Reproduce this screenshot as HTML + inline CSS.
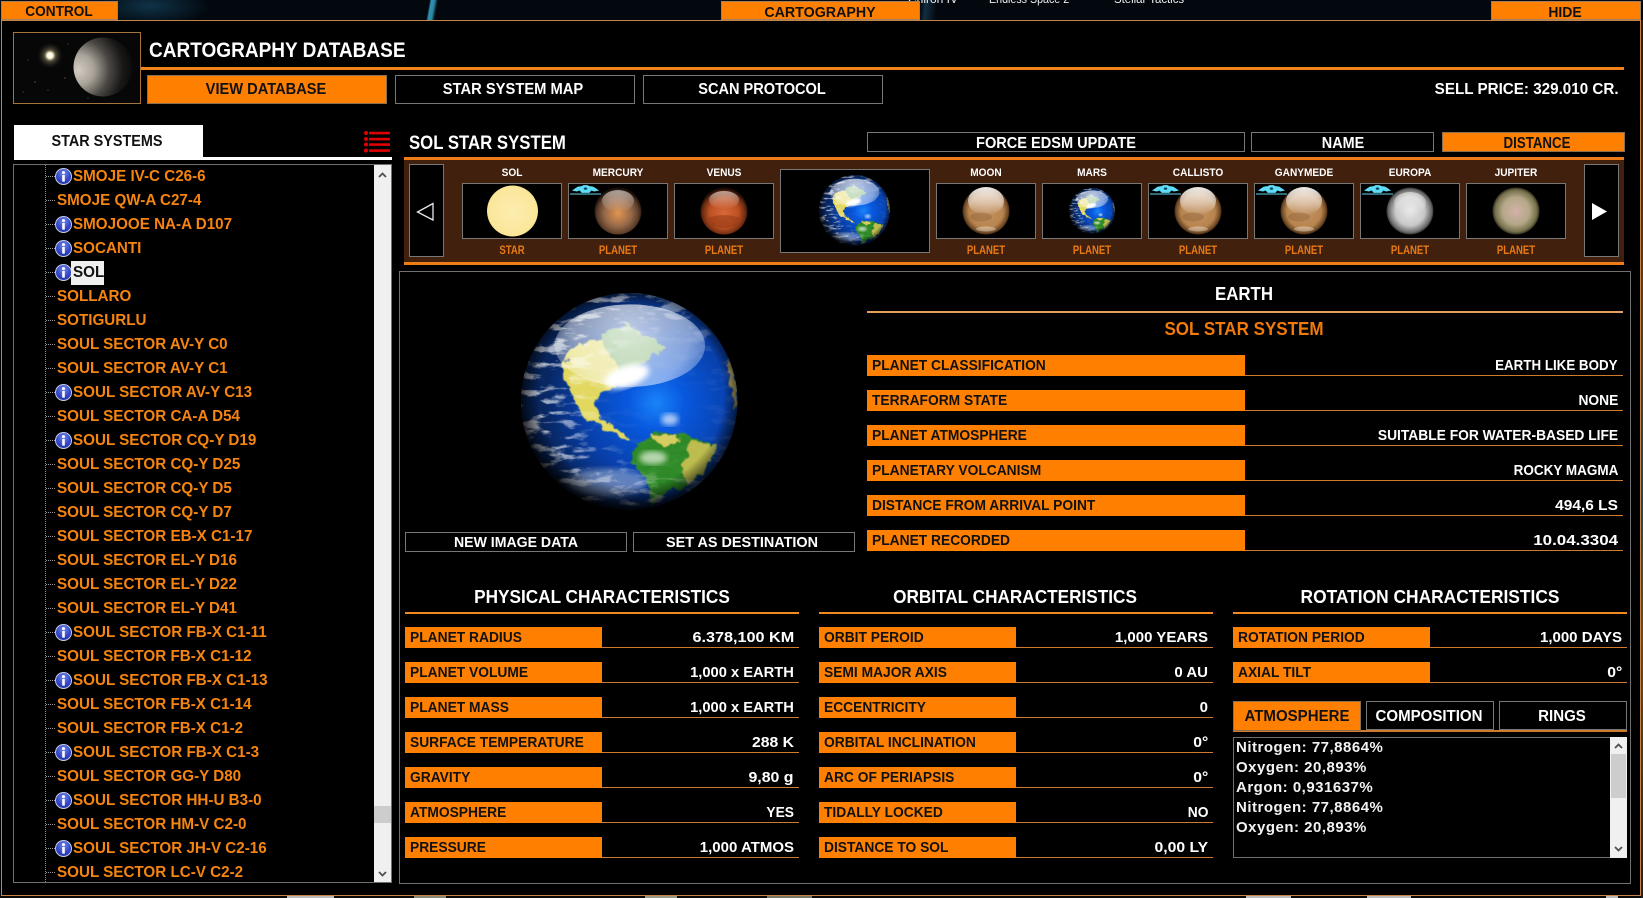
<!DOCTYPE html>
<html><head><meta charset="utf-8"><title>Cartography</title>
<style>
html,body{margin:0;padding:0;background:#000}
body{position:relative;width:1643px;height:898px;overflow:hidden;font-family:"Liberation Sans",sans-serif}
.a{position:absolute;box-sizing:border-box}
.t{position:absolute;white-space:nowrap;font:bold 15px/20px "Liberation Sans",sans-serif;color:#fff;transform:scaleX(var(--s,.92))}
.l{transform-origin:0 50%}
.r{transform-origin:100% 50%}
.c{transform:translateX(-50%) scaleX(var(--s,.92))}
.btn{position:absolute;box-sizing:border-box;border:1px solid #777;background:#000}
.on{background:#ff8000;border-color:#8a7050}
.k{color:#111}
.tab{position:absolute;box-sizing:border-box;background:#ff8000;border:1px solid #a08060;top:1px;height:19px}
.li{position:relative;height:24px}
.li:before{content:"";position:absolute;left:32px;top:11px;width:9px;border-top:1px dotted #999}
.li span{position:absolute;left:43px;top:0;white-space:nowrap;font:bold 16px/24px "Liberation Sans",sans-serif;color:#f58410;transform:scaleX(.95);transform-origin:0 50%}
.li.n span{left:59px}
.li svg{position:absolute;left:41px;top:3px;width:17px;height:17px}
.row{position:absolute;height:21px;box-sizing:border-box;border-bottom:1px solid #d07a30}
.row b{position:absolute;left:0;top:0;height:21px;background:#ff8000}
.row span{position:absolute;left:5px;top:1px;white-space:nowrap;font:bold 15px/20px "Liberation Sans",sans-serif;color:#111;transform:scaleX(.92);transform-origin:0 50%}
.row em{position:absolute;right:5px;top:1px;white-space:nowrap;font:bold 15px/20px "Liberation Sans",sans-serif;color:#fff;transform:scaleX(var(--s,.92));transform-origin:100% 50%}
.w{width:394px}.w b{width:197px}
.x{left:867px;width:756px}.x b{width:378px}
.cl{left:405px}.c2{left:819px}.c3{left:1233px}
.th{position:absolute;box-sizing:border-box;border:1px solid #777;background:#000;top:183px;width:100px;height:56px}
.hd{position:absolute;height:2px;background:#f08a20}
.tx{position:absolute;left:1236px;white-space:nowrap;font:bold 15px/20px "Liberation Sans",sans-serif;color:#f2f2f2;letter-spacing:.5px}
.dt{position:absolute;top:-8px;white-space:nowrap;font:12px/14px "Liberation Sans",sans-serif;color:#eee;transform:scaleX(.89);transform-origin:0 50%}
</style></head>
<body>
<!-- desktop backdrop -->
<div class="a" style="left:0;top:0;width:1643px;height:20px;background:
linear-gradient(100deg,transparent 0,transparent 26.1%,rgba(60,190,230,.75) 26.2%,rgba(60,190,230,.7) 26.4%,transparent 26.6%),
linear-gradient(95deg,transparent 56%,rgba(40,120,160,.35) 56.3%,transparent 57%),
radial-gradient(ellipse 60px 20px at 150px 6px,#0f3348,transparent),
#03080f"></div>
<div class="dt" style="left:908px;transform:none">Chiron IV</div>
<div class="dt" style="left:989px">Endless Space 2</div>
<div class="dt" style="left:1114px;transform:scaleX(.95)">Stellar Tactics</div>
<div class="a" style="left:0;top:896px;width:1643px;height:2px;background:#0a0a0a"></div>
<div class="a" style="left:287px;top:896px;width:47px;height:2px;background:#bbb"></div>
<div class="a" style="left:414px;top:896px;width:32px;height:2px;background:#887"></div>
<div class="a" style="left:645px;top:896px;width:32px;height:2px;background:#998"></div>
<div class="a" style="left:767px;top:896px;width:45px;height:2px;background:#776"></div>
<div class="a" style="left:1246px;top:896px;width:45px;height:2px;background:#bbb"></div>
<div class="a" style="left:1367px;top:896px;width:44px;height:2px;background:#bbb"></div>
<div class="a" style="left:1606px;top:896px;width:12px;height:2px;background:#bbb"></div>
<div class="a" style="left:1641px;top:20px;width:2px;height:878px;background:linear-gradient(#2a1a10,#5a3a20 30%,#184858 55%,#6a4a20 70%,#222 100%)"></div>

<!-- window -->
<div class="a" style="left:1px;top:20px;width:1640px;height:876px;background:#000;border:1px solid #c58448"></div>

<!-- top tabs -->
<div class="tab" style="left:1px;width:117px"></div>
<div class="t c k" style="left:59px;top:2px;--s:.91">CONTROL</div>
<div class="tab" style="left:721px;width:199px"></div>
<div class="t c k" style="left:820px;top:3px;--s:.95">CARTOGRAPHY</div>
<div class="tab" style="left:1491px;width:150px"></div>
<div class="t c k" style="left:1565px;top:3px;--s:.93">HIDE</div>

<!-- header -->
<svg class="a" style="left:13px;top:32px" width="128" height="72" viewBox="0 0 128 72">
<defs>
<radialGradient id="hp" cx="8%" cy="55%" r="95%"><stop offset="0" stop-color="#d2ccc2"/><stop offset=".28" stop-color="#a8a298"/><stop offset=".55" stop-color="#4c4945"/><stop offset=".8" stop-color="#191817"/><stop offset="1" stop-color="#080808"/></radialGradient>
<radialGradient id="hs"><stop offset="0" stop-color="#fff"/><stop offset=".22" stop-color="#fff6d8"/><stop offset=".45" stop-color="#7a7458" stop-opacity=".6"/><stop offset="1" stop-color="#222" stop-opacity="0"/></radialGradient>
</defs>
<rect x=".5" y=".5" width="127" height="71" fill="#070707" stroke="#a8743e"/>
<circle cx="37" cy="23.500" r="13" fill="url(#hs)"/>
<circle cx="90" cy="35" r="29.500" fill="url(#hp)"/>
<g fill="#777"><circle cx="22" cy="50" r=".6"/><circle cx="35" cy="58" r=".5"/><circle cx="15" cy="28" r=".5"/><circle cx="52" cy="46" r=".6"/><circle cx="55" cy="12" r=".5"/><circle cx="75" cy="66" r=".5"/><circle cx="10" cy="60" r=".5"/></g>
</svg>
<div class="t l" style="left:149px;top:39.500px;font-size:21.500px;--s:.885">CARTOGRAPHY DATABASE</div>
<div class="a" style="left:141px;top:67px;width:1483px;height:3px;background:#f08418"></div>
<div class="btn on" style="left:147px;top:75px;width:240px;height:29px"></div>
<div class="t c k" style="left:266px;top:79.500px;font-size:16px;--s:.915">VIEW DATABASE</div>
<div class="btn" style="left:395px;top:75px;width:240px;height:29px"></div>
<div class="t c" style="left:513px;top:79.500px;font-size:16px;--s:.92">STAR SYSTEM MAP</div>
<div class="btn" style="left:643px;top:75px;width:240px;height:29px"></div>
<div class="t c" style="left:762px;top:79.500px;font-size:16px;--s:.91">SCAN PROTOCOL</div>
<div class="t r" style="right:24px;top:79.500px;font-size:16px;--s:.95">SELL PRICE: 329.010 CR.</div>

<!-- star systems tab -->
<div class="a" style="left:14px;top:125px;width:189px;height:32px;background:#fff"></div>
<div class="a" style="left:14px;top:157px;width:378px;height:3px;background:#fff"></div>
<div class="t c k" style="left:107px;top:132px;font-size:16px;--s:.9">STAR SYSTEMS</div>
<svg class="a" style="left:364px;top:131px" width="27" height="22" viewBox="0 0 27 22">
<g fill="#e00000"><circle cx="2" cy="2" r="2"/><circle cx="2" cy="8" r="2"/><circle cx="2" cy="13.500" r="2"/><circle cx="2" cy="19.500" r="2"/>
<rect x="5" y=".8" width="21" height="2.600"/><rect x="5" y="6.800" width="21" height="2.600"/><rect x="5" y="12.300" width="21" height="2.600"/><rect x="5" y="18.300" width="21" height="2.600"/></g>
</svg>

<!-- list -->
<svg width="0" height="0" style="position:absolute"><defs>
<radialGradient id="ib" cx="50%" cy="30%" r="75%"><stop offset="0" stop-color="#6e86ee"/><stop offset=".6" stop-color="#3346c8"/><stop offset="1" stop-color="#1a2a9a"/></radialGradient>
<symbol id="inf" viewBox="0 0 17 17"><circle cx="8.500" cy="8.500" r="8" fill="url(#ib)" stroke="#c4cce8" stroke-width="1"/><circle cx="8.500" cy="4.600" r="1.500" fill="#fff"/><rect x="7.200" y="7" width="2.600" height="6.600" fill="#fff"/></symbol>
<symbol id="ship" viewBox="0 0 32 10"><path d="M2 5.500 L8 1.500 L12 1 L14 0 H18 L20 1 L24 1.500 L30 5.500 L25 6.500 L22 5.500 L20 8 H12 L10 5.500 L7 6.500 Z" fill="#5fdcf8"/><ellipse cx="16" cy="3.600" rx="1.800" ry="1.300" fill="#0a4a60"/><rect x="0" y="8.600" width="32" height="1.100" fill="#5fc8e0"/></symbol>
</defs></svg>
<div class="a" style="left:13px;top:164px;width:379px;height:719px;border:1px solid #707070;overflow:hidden;background:#000">
<div class="a" style="left:31px;top:0;height:719px;border-left:1px dotted #b87a48"></div>
<div style="position:absolute;left:0;top:0;width:360px">
<div class="li n"><svg><use href="#inf"/></svg><span>SMOJE IV-C C26-6</span></div>
<div class="li"><span>SMOJE QW-A C27-4</span></div>
<div class="li n"><svg><use href="#inf"/></svg><span>SMOJOOE NA-A D107</span></div>
<div class="li n"><svg><use href="#inf"/></svg><span>SOCANTI</span></div>
<div class="li n"><svg><use href="#inf"/></svg><div class="a" style="left:57px;top:0;width:33px;height:24px;background:#f0f0f0"></div><span style="color:#111">SOL</span></div>
<div class="li"><span>SOLLARO</span></div>
<div class="li"><span>SOTIGURLU</span></div>
<div class="li"><span>SOUL SECTOR AV-Y C0</span></div>
<div class="li"><span>SOUL SECTOR AV-Y C1</span></div>
<div class="li n"><svg><use href="#inf"/></svg><span>SOUL SECTOR AV-Y C13</span></div>
<div class="li"><span>SOUL SECTOR CA-A D54</span></div>
<div class="li n"><svg><use href="#inf"/></svg><span>SOUL SECTOR CQ-Y D19</span></div>
<div class="li"><span>SOUL SECTOR CQ-Y D25</span></div>
<div class="li"><span>SOUL SECTOR CQ-Y D5</span></div>
<div class="li"><span>SOUL SECTOR CQ-Y D7</span></div>
<div class="li"><span>SOUL SECTOR EB-X C1-17</span></div>
<div class="li"><span>SOUL SECTOR EL-Y D16</span></div>
<div class="li"><span>SOUL SECTOR EL-Y D22</span></div>
<div class="li"><span>SOUL SECTOR EL-Y D41</span></div>
<div class="li n"><svg><use href="#inf"/></svg><span>SOUL SECTOR FB-X C1-11</span></div>
<div class="li"><span>SOUL SECTOR FB-X C1-12</span></div>
<div class="li n"><svg><use href="#inf"/></svg><span>SOUL SECTOR FB-X C1-13</span></div>
<div class="li"><span>SOUL SECTOR FB-X C1-14</span></div>
<div class="li"><span>SOUL SECTOR FB-X C1-2</span></div>
<div class="li n"><svg><use href="#inf"/></svg><span>SOUL SECTOR FB-X C1-3</span></div>
<div class="li"><span>SOUL SECTOR GG-Y D80</span></div>
<div class="li n"><svg><use href="#inf"/></svg><span>SOUL SECTOR HH-U B3-0</span></div>
<div class="li"><span>SOUL SECTOR HM-V C2-0</span></div>
<div class="li n"><svg><use href="#inf"/></svg><span>SOUL SECTOR JH-V C2-16</span></div>
<div class="li"><span>SOUL SECTOR LC-V C2-2</span></div>
</div>
<div class="a" style="left:360px;top:0;width:17px;height:717px;background:#f0f0f0"></div>
<div class="a" style="left:360px;top:641px;width:17px;height:17px;background:#cdcdcd"></div>
<svg class="a" style="left:360px;top:0" width="17" height="717"><g fill="none" stroke="#505050" stroke-width="1.800"><path d="M5 12 L8.500 8.500 L12 12"/><path d="M5 707 L8.500 710.500 L12 707"/></g></svg>
</div>

<!-- system bar -->
<div class="t l" style="left:409px;top:133px;font-size:19.500px;--s:.86">SOL STAR SYSTEM</div>
<div class="btn" style="left:867px;top:132px;width:378px;height:20px"></div>
<div class="t c" style="left:1055.500px;top:134px;font-size:16px;--s:.91">FORCE EDSM UPDATE</div>
<div class="btn" style="left:1251px;top:132px;width:183px;height:20px"></div>
<div class="t c" style="left:1343px;top:134px;font-size:16px;--s:.9">NAME</div>
<div class="btn on" style="left:1442px;top:132px;width:183px;height:20px"></div>
<div class="t c k" style="left:1537px;top:134px;font-size:16px;--s:.83">DISTANCE</div>

<div class="a" style="left:404px;top:157px;width:1220px;height:108px;background:#41210e;border-top:3px solid #f07c18;border-bottom:3px solid #f07c18"></div>
<div class="btn" style="left:409px;top:164px;width:35px;height:93px"></div>
<div class="btn" style="left:1584px;top:164px;width:35px;height:93px"></div>
<div class="th" style="left:462px"></div><div class="th" style="left:568px"></div><div class="th" style="left:674px"></div>
<div class="btn" style="left:780px;top:169px;width:150px;height:84px"></div>
<div class="th" style="left:936px"></div><div class="th" style="left:1042px"></div><div class="th" style="left:1148px"></div><div class="th" style="left:1254px"></div><div class="th" style="left:1360px"></div><div class="th" style="left:1466px"></div>

<!-- planets -->
<svg class="a" style="left:0;top:0" width="1643" height="898" viewBox="0 0 1643 898">
<defs>
<radialGradient id="gsol" cx="50%" cy="50%" r="55%"><stop offset="0" stop-color="#fcedb0"/><stop offset=".85" stop-color="#fbe79a"/><stop offset="1" stop-color="#f2d674"/></radialGradient>
<radialGradient id="gmer" cx="50%" cy="55%" r="52%"><stop offset="0" stop-color="#e2964e"/><stop offset=".55" stop-color="#96684a"/><stop offset=".85" stop-color="#5a3c28"/><stop offset="1" stop-color="#1a100a"/></radialGradient>
<radialGradient id="gven" cx="50%" cy="55%" r="52%"><stop offset="0" stop-color="#d8683a"/><stop offset=".6" stop-color="#bc5022"/><stop offset=".88" stop-color="#6a2a10"/><stop offset="1" stop-color="#1c0c06"/></radialGradient>
<radialGradient id="gmoo" cx="50%" cy="50%" r="52%"><stop offset="0" stop-color="#c49464"/><stop offset=".7" stop-color="#b8844e"/><stop offset=".9" stop-color="#6e4824"/><stop offset="1" stop-color="#1e140a"/></radialGradient>
<radialGradient id="geur" cx="50%" cy="50%" r="52%"><stop offset="0" stop-color="#e8e8e8"/><stop offset=".6" stop-color="#c8c8c8"/><stop offset=".88" stop-color="#6a6a6a"/><stop offset="1" stop-color="#141414"/></radialGradient>
<radialGradient id="gjup" cx="50%" cy="50%" r="52%"><stop offset="0" stop-color="#d4b0a8"/><stop offset=".55" stop-color="#b4a888"/><stop offset=".85" stop-color="#76704c"/><stop offset="1" stop-color="#1a180e"/></radialGradient>
<linearGradient id="ghi" x1="0" y1="0" x2="0" y2="1"><stop offset="0" stop-color="#fff" stop-opacity=".9"/><stop offset=".55" stop-color="#fff" stop-opacity=".5"/><stop offset="1" stop-color="#fff" stop-opacity="0"/></linearGradient>
<linearGradient id="ghi2" x1="0" y1="0" x2="0" y2="1"><stop offset="0" stop-color="#fff" stop-opacity=".55"/><stop offset="1" stop-color="#fff" stop-opacity="0"/></linearGradient>

<radialGradient id="oc" gradientUnits="userSpaceOnUse" cx="770" cy="400" r="340"><stop offset="0" stop-color="#1a84fa"/><stop offset=".25" stop-color="#0858de"/><stop offset=".65" stop-color="#0840ac"/><stop offset="1" stop-color="#082660"/></radialGradient>
<radialGradient id="vg" gradientUnits="userSpaceOnUse" cx="695" cy="375" r="345"><stop offset="0" stop-color="#000" stop-opacity="0"/><stop offset=".8" stop-color="#000" stop-opacity="0"/><stop offset="1" stop-color="#000" stop-opacity=".9"/></radialGradient>
<radialGradient id="hl" gradientUnits="userSpaceOnUse" cx="690" cy="175" r="245"><stop offset="0" stop-color="#fff" stop-opacity=".72"/><stop offset=".75" stop-color="#fff" stop-opacity=".5"/><stop offset=".97" stop-color="#fff" stop-opacity=".28"/><stop offset="1" stop-color="#fff" stop-opacity="0"/></radialGradient>
<radialGradient id="cmg" gradientUnits="userSpaceOnUse" cx="800" cy="400" r="430"><stop offset="0" stop-color="#000"/><stop offset=".45" stop-color="#111"/><stop offset=".68" stop-color="#888"/><stop offset="1" stop-color="#ddd"/></radialGradient>
<mask id="cm" maskUnits="userSpaceOnUse" x="362" y="70" width="652" height="652"><rect x="362" y="70" width="652" height="652" fill="url(#cmg)"/></mask>
<filter id="cloud" x="0" y="0" width="1" height="1"><feTurbulence type="fractalNoise" baseFrequency=".014 .04" numOctaves="6" seed="11"/><feColorMatrix values="0 0 0 0 1 0 0 0 0 1 0 0 0 0 1 6 0 0 0 -3.100"/></filter>
<filter id="ld" x="-20%" y="-20%" width="140%" height="140%"><feTurbulence type="fractalNoise" baseFrequency=".035" numOctaves="4" seed="5" result="n"/><feDisplacementMap in="SourceGraphic" in2="n" scale="34" xChannelSelector="R" yChannelSelector="G"/><feGaussianBlur stdDeviation="1.200"/></filter>
<filter id="bl"><feGaussianBlur stdDeviation="9"/></filter>
<clipPath id="ec"><circle cx="688" cy="395" r="325"/></clipPath>
<symbol id="earth" viewBox="362 70 652 652" overflow="visible">
<g clip-path="url(#ec)">
<rect x="362" y="70" width="652" height="652" fill="url(#oc)"/>
<g filter="url(#ld)">
<path d="M482 285 L535 225 L610 210 L660 240 L680 300 L640 350 L600 372 L585 400 L600 445 L650 475 L695 515 L660 505 L600 468 L550 440 L515 375 Z" fill="#e2d85e"/>
<path d="M600 195 L690 165 L800 235 L725 285 L665 305 L625 250 Z" fill="#74ac66"/>
<path d="M710 530 L770 485 L870 500 L955 530 L915 610 L855 650 L795 672 L760 700 L745 640 L695 580 Z" fill="#2e8a26"/>
<path d="M875 510 L955 530 L915 605 L860 645 L850 590 Z" fill="#bcbc50"/>
<path d="M745 495 L830 495 L850 520 L780 525 Z" fill="#d6cd60"/>
<path d="M985 270 L1016 340 L1012 420 L990 350 Z" fill="#b8a860"/>
</g>
<rect x="362" y="70" width="652" height="652" filter="url(#cloud)" mask="url(#cm)" opacity=".9"/>
<ellipse cx="680" cy="320" rx="70" ry="32" transform="rotate(-18 680 320)" fill="#fff" filter="url(#bl)"/>
<ellipse cx="760" cy="565" rx="42" ry="20" fill="#e4f0dc" opacity=".75" filter="url(#bl)"/>
<ellipse cx="810" cy="450" rx="26" ry="18" fill="#fff" opacity=".65" filter="url(#bl)"/>
<ellipse cx="620" cy="640" rx="120" ry="42" fill="#cdd8ea" opacity=".45" filter="url(#bl)"/>
<ellipse cx="690" cy="228" rx="226" ry="124" fill="url(#hl)"/>
<rect x="362" y="70" width="652" height="652" fill="url(#vg)"/>
</g>
</symbol>
</defs>

<!-- sol -->
<circle cx="512.500" cy="211" r="25.500" fill="url(#gsol)"/>
<!-- mercury -->
<circle cx="618" cy="211" r="23.500" fill="url(#gmer)"/><ellipse cx="618" cy="201" rx="16" ry="11" fill="url(#ghi2)"/>
<!-- venus -->
<circle cx="724" cy="211" r="23.500" fill="url(#gven)"/><ellipse cx="724" cy="200" rx="15" ry="9" fill="url(#ghi2)"/><path d="M708 218 Q724 212 740 218 L736 226 Q724 230 712 226 Z" fill="#8a3212" opacity=".45"/>
<!-- earth small -->
<use href="#earth" x="819" y="175" width="71" height="71"/>
<!-- moons -->
<g id="mn"><circle cx="986" cy="211" r="23.500" fill="url(#gmoo)"/><ellipse cx="986" cy="201" rx="18" ry="14" fill="url(#ghi)"/><ellipse cx="981" cy="217" rx="11" ry="4.500" fill="#8a6038" opacity=".4"/><ellipse cx="986" cy="229" rx="10" ry="2.500" fill="#fff" opacity=".35"/></g>
<use href="#earth" x="1069" y="188" width="46" height="46"/>
<use href="#mn" x="212"/><use href="#mn" x="318"/>
<circle cx="1410" cy="211" r="23.500" fill="url(#geur)"/><ellipse cx="1410" cy="203" rx="16" ry="11" fill="url(#ghi2)"/>
<circle cx="1516" cy="211" r="23.500" fill="url(#gjup)"/>
<!-- ships -->
<use href="#ship" x="570" y="185" width="31" height="10"/>
<use href="#ship" x="1150" y="185" width="31" height="10"/>
<use href="#ship" x="1256" y="185" width="31" height="10"/>
<use href="#ship" x="1362" y="185" width="31" height="10"/>
<!-- arrows -->
<path d="M433 203.500 L417.500 212 L433 220 Z" fill="none" stroke="#e8e8e8" stroke-width="1.300"/>
<path d="M1592 203 L1607 211.500 L1592 220 Z" fill="#fff"/>
<!-- big earth -->
<use href="#earth" x="520.700" y="293" width="217" height="217"/>
</svg>

<!-- thumb labels -->
<div class="t c" style="left:512px;top:162.500px;font-size:11px">SOL</div>
<div class="t c" style="left:618px;top:162.500px;font-size:11px">MERCURY</div>
<div class="t c" style="left:724px;top:162.500px;font-size:11px">VENUS</div>
<div class="t c" style="left:986px;top:162.500px;font-size:11px">MOON</div>
<div class="t c" style="left:1092px;top:162.500px;font-size:11px">MARS</div>
<div class="t c" style="left:1198px;top:162.500px;font-size:11px">CALLISTO</div>
<div class="t c" style="left:1304px;top:162.500px;font-size:11px">GANYMEDE</div>
<div class="t c" style="left:1410px;top:162.500px;font-size:11px">EUROPA</div>
<div class="t c" style="left:1516px;top:162.500px;font-size:11px">JUPITER</div>
<div class="t c" style="left:512px;top:241px;font-size:11.500px;--s:.83;color:#e87a14">STAR</div>
<div class="t c" style="left:618px;top:241px;font-size:11.500px;--s:.83;color:#e87a14">PLANET</div>
<div class="t c" style="left:724px;top:241px;font-size:11.500px;--s:.83;color:#e87a14">PLANET</div>
<div class="t c" style="left:986px;top:241px;font-size:11.500px;--s:.83;color:#e87a14">PLANET</div>
<div class="t c" style="left:1092px;top:241px;font-size:11.500px;--s:.83;color:#e87a14">PLANET</div>
<div class="t c" style="left:1198px;top:241px;font-size:11.500px;--s:.83;color:#e87a14">PLANET</div>
<div class="t c" style="left:1304px;top:241px;font-size:11.500px;--s:.83;color:#e87a14">PLANET</div>
<div class="t c" style="left:1410px;top:241px;font-size:11.500px;--s:.83;color:#e87a14">PLANET</div>
<div class="t c" style="left:1516px;top:241px;font-size:11.500px;--s:.83;color:#e87a14">PLANET</div>

<!-- main panel -->
<div class="a" style="left:399px;top:271px;width:1232px;height:613px;border:1px solid #707070"></div>

<div class="btn" style="left:405px;top:532px;width:222px;height:20px"></div>
<div class="t c" style="left:516px;top:533px;--s:.94">NEW IMAGE DATA</div>
<div class="btn" style="left:633px;top:532px;width:222px;height:20px"></div>
<div class="t c" style="left:741.500px;top:533px;--s:.96">SET AS DESTINATION</div>

<div class="t c" style="left:1244px;top:284px;font-size:18px;--s:.935">EARTH</div>
<div class="hd" style="left:867px;top:311px;width:756px;background:#e8a060"></div>
<div class="t c" style="left:1244px;top:319px;font-size:18px;--s:.945;color:#f07a0a">SOL STAR SYSTEM</div>

<div class="row x" style="top:355px"><b></b><span>PLANET CLASSIFICATION</span><em style="--s:.89">EARTH LIKE BODY</em></div>
<div class="row x" style="top:390px"><b></b><span>TERRAFORM STATE</span><em>NONE</em></div>
<div class="row x" style="top:425px"><b></b><span>PLANET ATMOSPHERE</span><em>SUITABLE FOR WATER-BASED LIFE</em></div>
<div class="row x" style="top:460px"><b></b><span>PLANETARY VOLCANISM</span><em style="--s:.9">ROCKY MAGMA</em></div>
<div class="row x" style="top:495px"><b></b><span>DISTANCE FROM ARRIVAL POINT</span><em style="--s:1.03">494,6 LS</em></div>
<div class="row x" style="top:530px"><b></b><span>PLANET RECORDED</span><em style="--s:1.13">10.04.3304</em></div>

<!-- physical -->
<div class="t c" style="left:601.500px;top:587px;font-size:18px;--s:.955">PHYSICAL CHARACTERISTICS</div>
<div class="hd" style="left:405px;top:612px;width:394px"></div>
<div class="row w cl" style="top:627px"><b></b><span>PLANET RADIUS</span><em style="--s:1.08">6.378,100 KM</em></div>
<div class="row w cl" style="top:662px"><b></b><span>PLANET VOLUME</span><em style="--s:.98">1,000 x EARTH</em></div>
<div class="row w cl" style="top:697px"><b></b><span>PLANET MASS</span><em style="--s:.98">1,000 x EARTH</em></div>
<div class="row w cl" style="top:732px"><b></b><span>SURFACE TEMPERATURE</span><em style="--s:1.05">288 K</em></div>
<div class="row w cl" style="top:767px"><b></b><span>GRAVITY</span><em style="--s:1.06">9,80 g</em></div>
<div class="row w cl" style="top:802px"><b></b><span>ATMOSPHERE</span><em>YES</em></div>
<div class="row w cl" style="top:837px"><b></b><span>PRESSURE</span><em style="--s:1">1,000 ATMOS</em></div>

<!-- orbital -->
<div class="t c" style="left:1015px;top:587px;font-size:18px;--s:.955">ORBITAL CHARACTERISTICS</div>
<div class="hd" style="left:819px;top:612px;width:394px"></div>
<div class="row w c2" style="top:627px"><b></b><span>ORBIT PEROID</span><em style="--s:1">1,000 YEARS</em></div>
<div class="row w c2" style="top:662px"><b></b><span>SEMI MAJOR AXIS</span><em style="--s:1">0 AU</em></div>
<div class="row w c2" style="top:697px"><b></b><span>ECCENTRICITY</span><em style="--s:1">0</em></div>
<div class="row w c2" style="top:732px"><b></b><span>ORBITAL INCLINATION</span><em style="--s:1.05">0°</em></div>
<div class="row w c2" style="top:767px"><b></b><span>ARC OF PERIAPSIS</span><em style="--s:1.05">0°</em></div>
<div class="row w c2" style="top:802px"><b></b><span>TIDALLY LOCKED</span><em>NO</em></div>
<div class="row w c2" style="top:837px"><b></b><span>DISTANCE TO SOL</span><em style="--s:1.05">0,00 LY</em></div>

<!-- rotation -->
<div class="t c" style="left:1429.500px;top:587px;font-size:18px;--s:.965">ROTATION CHARACTERISTICS</div>
<div class="hd" style="left:1233px;top:612px;width:394px"></div>
<div class="row w c3" style="top:627px"><b></b><span>ROTATION PERIOD</span><em style="--s:1">1,000 DAYS</em></div>
<div class="row w c3" style="top:662px"><b></b><span>AXIAL TILT</span><em style="--s:1.05">0°</em></div>

<div class="a" style="left:1233px;top:730px;width:394px;height:2px;background:#d07a30"></div>
<div class="btn on" style="left:1233px;top:701px;width:128px;height:30px"></div>
<div class="t c k" style="left:1297px;top:707px;font-size:16px;--s:.94">ATMOSPHERE</div>
<div class="btn" style="left:1366px;top:701px;width:128px;height:29px"></div>
<div class="t c" style="left:1429px;top:707px;font-size:16px;--s:.94">COMPOSITION</div>
<div class="btn" style="left:1499px;top:701px;width:128px;height:29px"></div>
<div class="t c" style="left:1562px;top:707px;font-size:16px;--s:.94">RINGS</div>

<div class="a" style="left:1233px;top:737px;width:394px;height:121px;border:1px solid #707070;background:#000"></div>
<div class="tx" style="top:738px">Nitrogen: 77,8864%</div>
<div class="tx" style="top:758px">Oxygen: 20,893%</div>
<div class="tx" style="top:778px">Argon: 0,931637%</div>
<div class="tx" style="top:798px">Nitrogen: 77,8864%</div>
<div class="tx" style="top:818px">Oxygen: 20,893%</div>
<div class="a" style="left:1610px;top:737px;width:17px;height:121px;background:#f0f0f0"></div>
<div class="a" style="left:1611px;top:754px;width:15px;height:44px;background:#cdcdcd"></div>
<svg class="a" style="left:1610px;top:737px" width="17" height="121"><g fill="none" stroke="#505050" stroke-width="1.800"><path d="M5 11 L8.500 7.500 L12 11"/><path d="M5 110 L8.500 113.500 L12 110"/></g></svg>
</body></html>
